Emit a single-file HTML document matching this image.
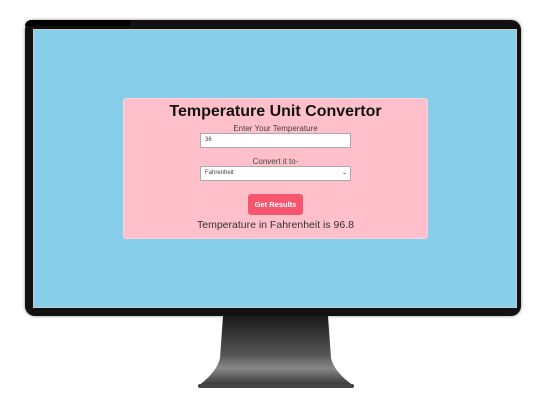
<!DOCTYPE html>
<html><head><style>
body{margin:0;width:551px;height:405px;background:#fff;position:relative;overflow:hidden;font-family:"Liberation Sans",sans-serif}
.mon{position:absolute;left:25px;top:20px;width:496px;height:296px;background:#111;border-radius:10px;box-shadow:0 0 3px #888}
.scr{position:absolute;left:33px;top:29px;width:484px;height:279px;background:#87ceea;border:1px solid #ccc;box-sizing:border-box}
.card{position:absolute;left:123px;top:98px;width:305px;height:141px;background:#ffbfcb;border:1px solid #f4d6dc;border-radius:3px;box-sizing:border-box;text-align:center;color:#222}
.t{position:absolute;left:0;right:0;top:4px;font-size:16px;font-weight:bold;color:#111}
.l{position:absolute;left:0;right:0;font-size:8px;color:#444}
.in{position:absolute;left:76px;width:151px;height:15px;background:#fff;border:1px solid #aaa;box-sizing:border-box;font-size:6px;text-align:left;padding-left:4px;line-height:13px;color:#444}
.btn{position:absolute;left:124px;top:95px;width:55px;height:21px;background:#f7566f;border-radius:3px;color:#fff;font-size:7.5px;font-weight:bold;line-height:21px}
.r{position:absolute;left:0;right:0;top:120px;font-size:10.5px;color:#333}
</style></head><body>
<div class="mon"></div>
<div style="position:absolute;left:25px;top:20px;width:105px;height:6px;background:#000;border-radius:10px 0 0 0"></div>
<div class="scr"></div>
<svg style="position:absolute;left:0;top:0" width="551" height="405">
<defs><linearGradient id="g" x1="0" y1="0" x2="0" y2="1"><stop offset="0" stop-color="#1a1a1a"/><stop offset="0.55" stop-color="#555"/><stop offset="0.75" stop-color="#888"/><stop offset="1" stop-color="#333"/></linearGradient></defs>
<path d="M223 316 L328 316 L331 358 Q334 372 354 386 L198 386 Q217 372 220 358 Z" fill="url(#g)"/>
<rect x="198" y="384" width="156" height="4" rx="2" fill="#444"/>
</svg>
<div class="card">
<div class="t">Temperature Unit Convertor</div>
<div class="l" style="top:25px">Enter Your Temperature</div>
<div class="in" style="top:34px">36</div>
<div class="l" style="top:58px">Convert it to-</div>
<div class="in" style="top:67px">Fahrenheit<span style="position:absolute;right:3px;font-size:6px">&#8964;</span></div>
<div class="btn">Get Results</div>
<div class="r">Temperature in Fahrenheit is 96.8</div>
</div>
</body></html>
